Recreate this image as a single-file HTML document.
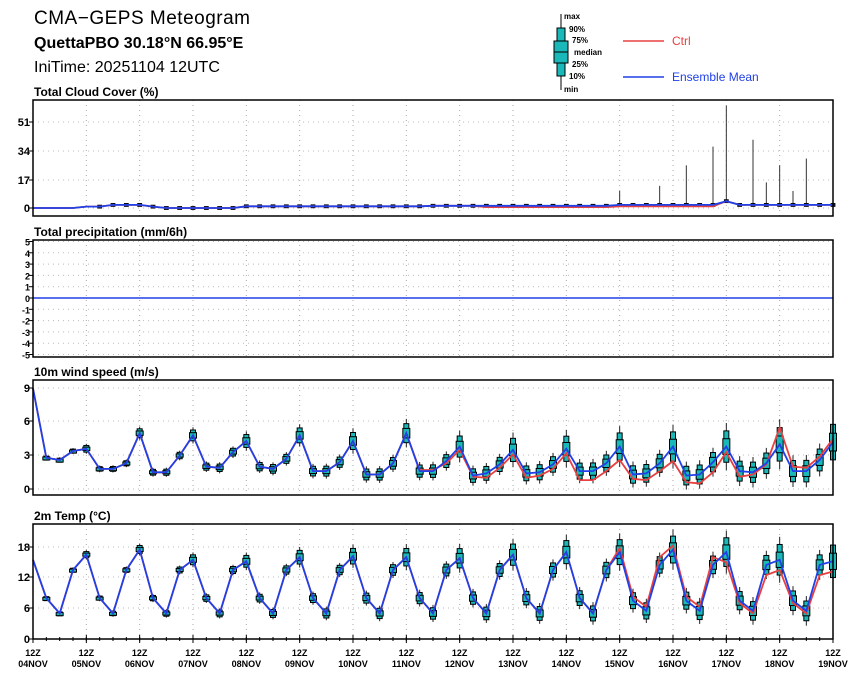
<!DOCTYPE html>
<html><head><meta charset="utf-8"><style>
html,body{margin:0;padding:0;background:#fff}
svg{display:block}
text{font-family:"Liberation Sans",sans-serif;fill:#000}
</style></head><body>
<svg id="s" width="860" height="677" xmlns="http://www.w3.org/2000/svg">
<text x="34" y="24" font-size="19" letter-spacing="0.5">CMA−GEPS Meteogram</text>
<text x="34" y="48" font-size="16" font-weight="bold">QuettaPBO 30.18°N 66.95°E</text>
<text x="34" y="72" font-size="16">IniTime: 20251104 12UTC</text>
<g font-size="8" font-weight="bold">
<line x1="561" y1="14" x2="561" y2="90" stroke="#000"/>
<rect x="557" y="28" width="8" height="48" fill="#1ab8b8" stroke="#000"/>
<rect x="554" y="41" width="14" height="22" fill="#1ab8b8" stroke="#000"/>
<line x1="554" y1="52" x2="568" y2="52" stroke="#000"/>
<text x="564" y="19">max</text><text x="569" y="32">90%</text><text x="572" y="43">75%</text>
<text x="574" y="55">median</text><text x="572" y="67">25%</text><text x="569" y="79">10%</text><text x="564" y="92">min</text>
</g>
<line x1="623" y1="41" x2="664" y2="41" stroke="#e84040" stroke-width="1.5"/>
<text x="672" y="45" font-size="12" style="fill:#e84040">Ctrl</text>
<line x1="623" y1="77" x2="664" y2="77" stroke="#2040e8" stroke-width="1.5"/>
<text x="672" y="81" font-size="12" style="fill:#2040e8">Ensemble Mean</text>
<g id="g"></g>
</svg>
<script>
var g=document.getElementById('g'),h='';
function X(i){return 33+i*800/60;}
function T(x,y,s,a,extra){h+='<text x="'+x+'" y="'+y+'" font-size="'+a+'" '+(extra||'')+'>'+s+'</text>';}
var panels=[
 {t:100,b:216,title:'Total Cloud Cover (%)',ticks:[[51,122],[34,151],[17,180],[0,208]],y0:208,k:29/17},
 {t:240,b:357,title:'Total precipitation (mm/6h)',ticks:[],y0:298,k:11.3},
 {t:380,b:495,title:'10m wind speed (m/s)',ticks:[[9,388],[6,421],[3,455],[0,489]],y0:489,k:33.5/3},
 {t:524,b:639,title:'2m Temp (°C)',ticks:[[18,547],[12,577],[6,608],[0,639]],y0:639,k:92/18}
];
for(var v=5;v>=-5;v--)panels[1].ticks.push([v,298-v*11.3]);
panels.forEach(function(p,pi){
 T(34,p.t-4,p.title,12,'font-weight="bold"');
 for(var d=1;d<15;d++){var x=33+d*800/15;h+='<line x1="'+x+'" y1="'+p.t+'" x2="'+x+'" y2="'+p.b+'" stroke="#aaa" stroke-dasharray="1,4"/>';}
 p.ticks.forEach(function(tk){h+='<line x1="33" y1="'+tk[1]+'" x2="833" y2="'+tk[1]+'" stroke="#bbb" stroke-dasharray="1,4"/><line x1="29" y1="'+tk[1]+'" x2="33" y2="'+tk[1]+'" stroke="#000"/>';T(30,tk[1]+4,tk[0],pi==1?9:11,'text-anchor="end" font-weight="bold"');});
 p.Y=function(val){return p.y0-val*p.k;};
});
var wm=[9,2.8,2.6,3.4,3.6,1.8,1.8,2.3,5.0,1.5,1.5,3.0,4.8,2.0,1.9,3.3,4.3,2.0,1.8,2.7,4.8,1.6,1.6,2.4,4.3,1.3,1.3,2.3,5.0,1.6,1.6,2.5,3.8,1.2,1.4,2.2,3.5,1.4,1.5,2.2,3.6,1.6,1.6,2.3,3.8,1.3,1.4,2.3,3.8,1.2,1.3,2.4,3.8,1.6,1.5,2.3,4.0,1.6,1.6,2.6,4.2];
var wc=wm.slice();
var adj={29:1.7,30:1.7,31:2.3,32:3.5,33:1.1,34:1.0,35:1.9,36:3.1,37:1.0,38:1.2,39:1.8,40:3.2,41:0.8,42:0.8,43:1.6,44:2.6,45:0.9,46:0.8,47:1.6,48:2.5,49:0.6,50:0.5,51:1.5,52:3.3,53:1.1,54:1.3,55:2.2,56:5.5,57:2.0,58:1.9,59:2.9,60:4.5};
for(var k in adj)wc[k]=adj[k];
var tm=[],tc=[],hi=[15.5,16.5,17.5,15.5,15.2,16,16.2,16,15.8,16.5,17,17,17.5,17,15.5,15.2];
for(var i=0;i<61;i++){var d=Math.floor(i/4),r=i%4,v;
 if(r==0)v=hi[d];else if(r==1)v=8;else if(r==2)v=5;else v=13.5;
 if(i>=44){if(r==1)v=7.5;if(r==2)v=5.5;if(r==3)v=14.5;}
 tm.push(v);var c=v;if(i>=44){c=v+(r==0?0.8:r==3?1.5:0.8);} if(i>=52){c=v+(r==0?-2:r==3?-2:-0.5);}tc.push(c);}
var cm=[];for(var i=0;i<61;i++){var v=0;if(i>=4&&i<=9)v=(i>=6&&i<=8)?1.8:0.8;if(i>=16)v=1;if(i>=30)v=1.3;if(i>=44)v=1.8;if(i==52)v=4;cm.push(v);}
var cc=cm.map(function(v,i){return i>=34&&i<52?Math.max(0,v-0.8):v;});
function line(p,arr,col){var s='';arr.forEach(function(v,i){s+=(i?'L':'M')+X(i).toFixed(1)+','+p.Y(v).toFixed(1);});h+='<path d="'+s+'" fill="none" stroke="'+col+'" stroke-width="1.8"/>';}
function boxes(p,arr,sc,cloud){arr.forEach(function(v,i){var x=X(i),sp=(0.12+i/60*0.8)*sc*(i%4==0?1.6:1);if(i==0)return;
 var y=p.Y(v),a=sp*p.k;
 if(cloud){if(i<5)return;var wh={44:10,47:13,49:25,51:36,52:60,54:40,55:15,56:25,57:10,58:29};if(wh[i])h+='<line x1="'+x+'" y1="'+p.Y(wh[i])+'" x2="'+x+'" y2="'+y+'" stroke="#333"/>';h+='<rect x="'+(x-2)+'" y="'+(y-1.5)+'" width="4" height="3" fill="#123" stroke="#000" stroke-width="0.8"/>';return;}
 h+='<line x1="'+x+'" y1="'+(y-a*1.8)+'" x2="'+x+'" y2="'+(y+a*1.8)+'" stroke="#222"/>';
 h+='<rect x="'+(x-2.5)+'" y="'+(y-a*1.2)+'" width="5" height="'+Math.max(4,a*2.4)+'" fill="#1ab8b8" stroke="#000"/>';
 h+='<rect x="'+(x-3.5)+'" y="'+(y-a*0.6)+'" width="7" height="'+Math.max(3,a*1.2)+'" fill="#1ab8b8" stroke="#000"/>';});}
var P=panels;
boxes(P[0],cm,1,true);line(P[0],cc,'#e84040');line(P[0],cm,'#2040e8');
h+='<line x1="33" y1="298" x2="833" y2="298" stroke="#2040e8" stroke-width="1.5"/>';
boxes(P[2],wm,0.9);line(P[2],wc,'#e84040');line(P[2],wm,'#2040e8');
boxes(P[3],tm,1.8);line(P[3],tc,'#e84040');line(P[3],tm,'#2040e8');
panels.forEach(function(p){h+='<rect x="33" y="'+p.t+'" width="800" height="'+(p.b-p.t)+'" fill="none" stroke="#000" stroke-width="1.5"/>';});
var days=['04','05','06','07','08','09','10','11','12','13','14','15','16','17','18','19'];
days.forEach(function(d,j){var x=33+j*800/15;h+='<line x1="'+x+'" y1="635" x2="'+x+'" y2="643" stroke="#000"/>';T(x,656,'12Z',9,'text-anchor="middle" font-weight="bold"');T(x,667,d+'NOV',9,'text-anchor="middle" font-weight="bold"');});
for(var i=0;i<=60;i++)h+='<line x1="'+X(i)+'" y1="637" x2="'+X(i)+'" y2="641" stroke="#000"/>';
g.innerHTML=h;
</script>
</body></html>
